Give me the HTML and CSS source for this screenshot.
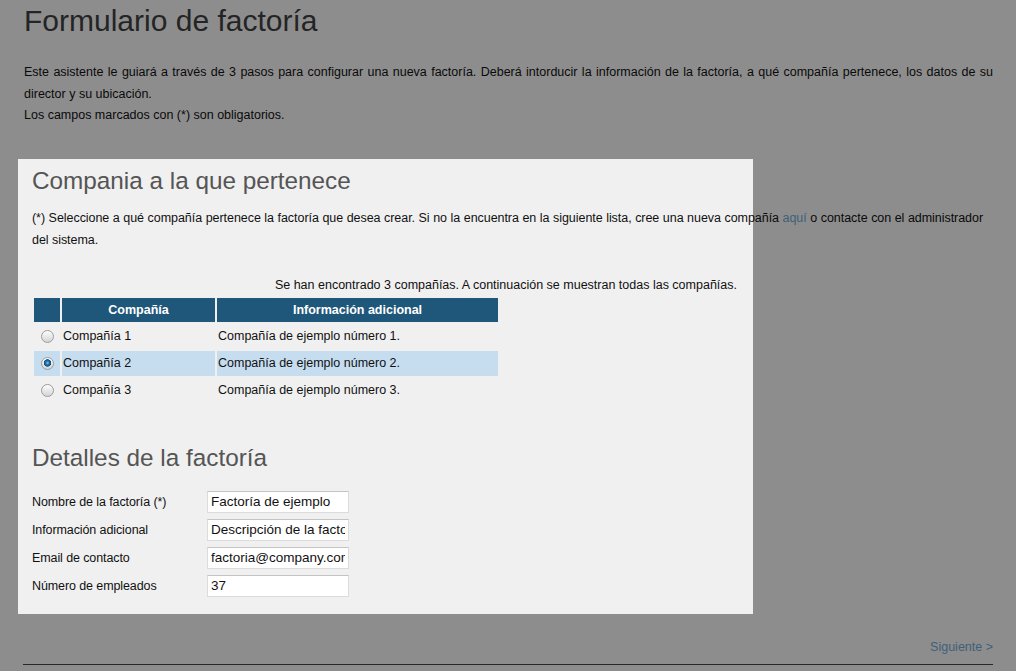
FILE: index.html
```html
<!DOCTYPE html>
<html lang="es">
<head>
<meta charset="utf-8">
<title>Formulario de factoría</title>
<link rel="stylesheet" href="styles.css">
</head>
<body>
<div class="page">
  <h1 class="title">Formulario de factoría</h1>
  <p class="intro">Este asistente le guiará a través de 3 pasos para configurar una nueva factoría. Deberá intorducir la información de la factoría, a qué compañía pertenece, los datos de su director y su ubicación.<br>Los campos marcados con (*) son obligatorios.</p>

  <section class="step">
    <h2 class="step-title">Compania a la que pertenece</h2>
    <p class="desc">(*) Seleccione a qué compañía pertenece la factoría que desea crear. Si no la encuentra en la siguiente lista, cree una nueva compañía <a class="link" href="#">aquí</a> o contacte con el administrador del sistema.</p>
    <div class="note">Se han encontrado 3 compañías. A continuación se muestran todas las compañías.</div>
    <table class="grid">
      <thead>
        <tr><th class="c-radio"></th><th class="c-name">Compañía</th><th class="c-info">Información adicional</th></tr>
      </thead>
      <tbody>
        <tr><td class="c-radio"><input class="radio" type="radio" name="comp"></td><td>Compañía 1</td><td>Compañía de ejemplo número 1.</td></tr>
        <tr class="selected"><td class="c-radio"><input class="radio" type="radio" name="comp" checked></td><td>Compañía 2</td><td>Compañía de ejemplo número 2.</td></tr>
        <tr><td class="c-radio"><input class="radio" type="radio" name="comp"></td><td>Compañía 3</td><td>Compañía de ejemplo número 3.</td></tr>
      </tbody>
    </table>

    <h2 class="step-title details">Detalles de la factoría</h2>
    <div class="form">
      <label class="lbl">Nombre de la factoría (*)</label><input class="field" type="text" value="Factoría de ejemplo">
      <label class="lbl">Información adicional</label><input class="field" type="text" value="Descripción de la factoría">
      <label class="lbl">Email de contacto</label><input class="field" type="text" value="factoria@company.com">
      <label class="lbl">Número de empleados</label><input class="field" type="text" value="37">
    </div>
  </section>

  <div class="footer"><a class="link next" href="#">Siguiente &gt;</a></div>
</div>
<div class="spotlight"></div>
</body>
</html>
```
FILE: styles.css
```css
html, body {
  margin: 0;
  padding: 0;
}
body {
  background: #f0f0f0;
  font-family: "Liberation Sans", Arial, sans-serif;
  color: #111;
  font-size: 12.5px;
  position: relative;
  min-height: 671px;
  overflow: hidden;
}
.page {
  padding: 0 23px;
}
.title {
  margin: 3px 0 0;
  font-size: 30px;
  font-weight: normal;
  line-height: 36px;
  color: #3e3e3e;
  padding-left: 1px;
}
.intro {
  margin: 23px 0 0;
  line-height: 21.5px;
  text-align: justify;
  padding-left: 1px;
}
.step {
  margin-top: 39px;
  padding: 0 10px 0 8px;
}
.step-title {
  margin: 0;
  font-size: 24.3px;
  font-weight: normal;
  line-height: 30px;
  color: #555;
  padding-left: 1px;
}
.desc {
  margin: 11px 0 0;
  line-height: 22px;
  text-align: justify;
  padding-left: 1px;
  letter-spacing: -0.05px;
}
.link {
  color: #6ca3cf;
  text-decoration: none;
}
.note {
  margin-top: 23px;
  width: 706px;
  text-align: right;
  line-height: 22px;
}
.grid {
  border-collapse: separate;
  border-spacing: 2px;
  margin-left: 1px;
  font-size: 12.5px;
}
.grid th {
  background: #1f577a;
  color: #fff;
  font-weight: bold;
  height: 24px;
  padding: 0;
  text-align: center;
}
.grid td {
  height: 25px;
  padding: 0 1px;
  text-align: left;
}
.grid .c-radio {
  width: 26px;
  padding: 0;
  text-align: center;
}
.grid .c-name { width: 153px; }
.grid .c-info { width: 281px; }
.grid .selected td {
  background: #c6ddf0;
}
.radio {
  appearance: none;
  -webkit-appearance: none;
  width: 13px;
  height: 13px;
  margin: 0;
  border-radius: 50%;
  border: 1px solid #9c9c9c;
  background: linear-gradient(#fdfdfd, #d4d4d4);
  vertical-align: middle;
  display: inline-block;
}
.radio:checked {
  background:
    radial-gradient(circle at 50% 45%, #7cc0ec 0, #1a6fae 2px, #0f4f80 3.4px, rgba(15,79,128,0) 4px),
    linear-gradient(#fdfdfd, #d4d4d4);
}
.details {
  margin-top: 38px;
}
.form {
  margin-top: 18px;
  display: grid;
  grid-template-columns: 176px 142px;
  row-gap: 6px;
  align-items: center;
}
.lbl {
  padding-left: 1px;
  letter-spacing: -0.1px;
}
.field {
  box-sizing: border-box;
  width: 142px;
  height: 22px;
  margin: 0;
  padding: 0 3px;
  border: 1px solid #dcdcdc;
  border-top-color: #c4c4c4;
  background: #fff;
  font-family: "Liberation Sans", Arial, sans-serif;
  font-size: 13.5px;
  color: #111;
  outline: none;
}
.footer {
  margin-top: 39px;
  text-align: right;
  line-height: 22px;
  padding-bottom: 6px;
  border-bottom: 1px solid #444;
}
.spotlight {
  position: absolute;
  left: 18px;
  top: 159px;
  width: 735px;
  height: 455px;
  box-shadow: 0 0 0 3000px rgba(0, 0, 0, 0.41);
  pointer-events: none;
  z-index: 10;
}
```
